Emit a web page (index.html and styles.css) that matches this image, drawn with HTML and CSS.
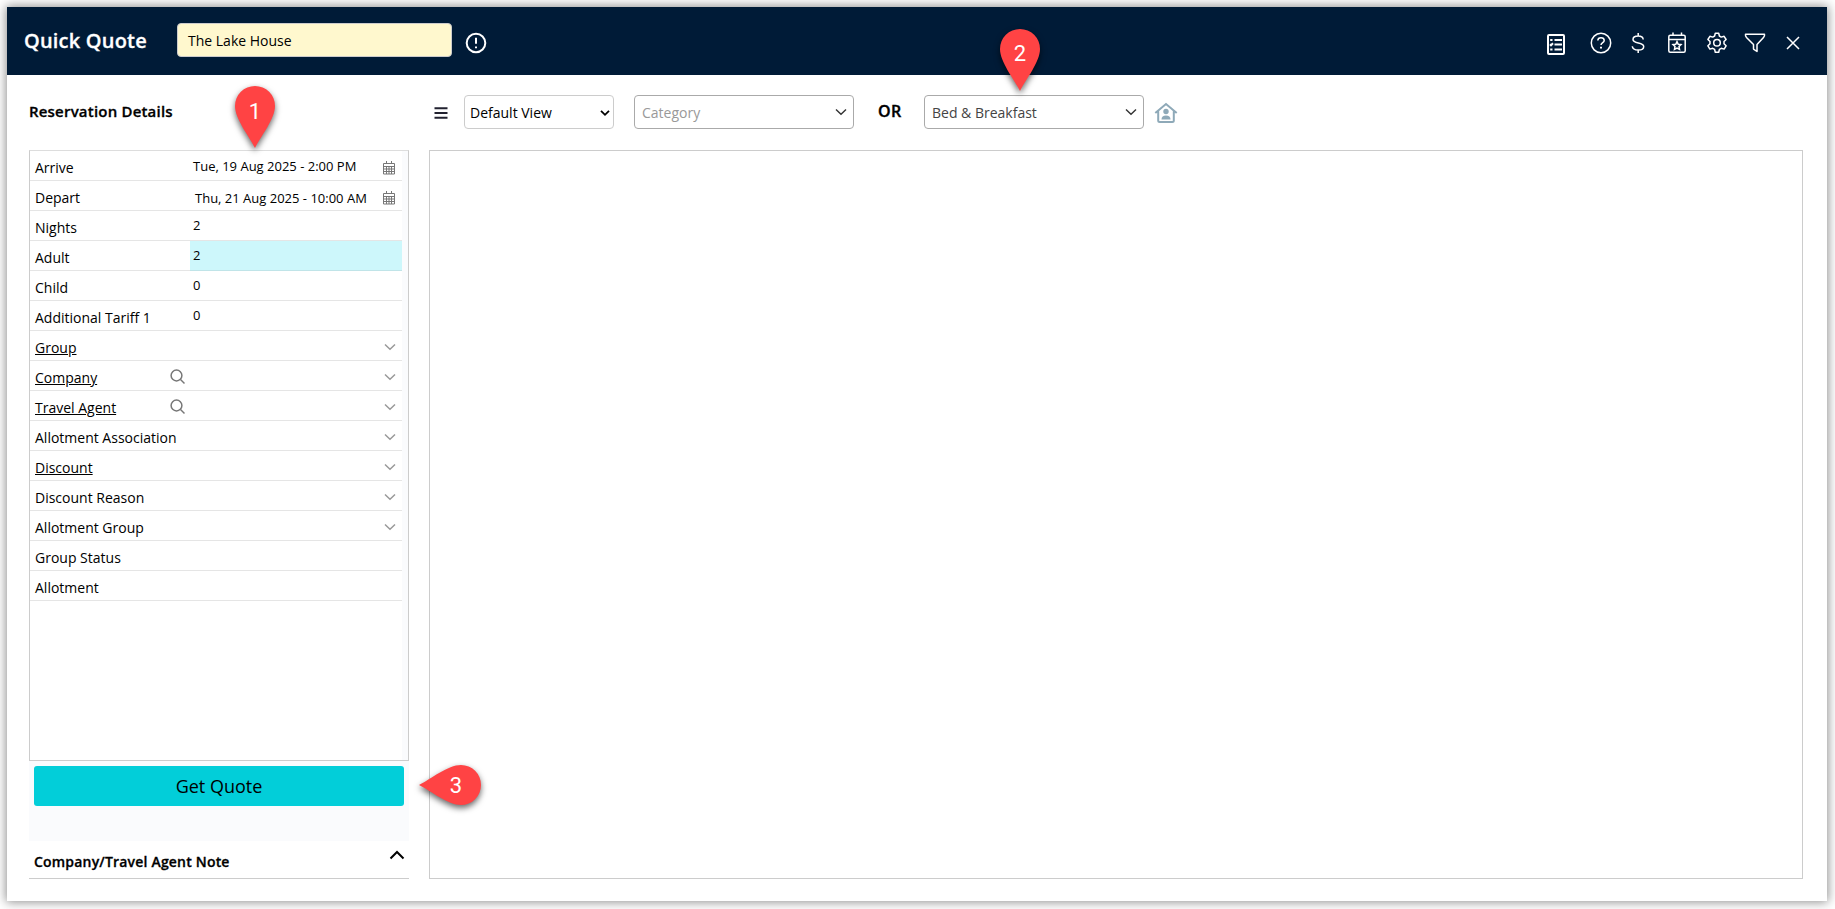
FILE: index.html
```html
<!DOCTYPE html>
<html lang="en">
<head>
<meta charset="utf-8">
<title>Quick Quote</title>
<link rel="stylesheet" href="styles.css">
</head>
<body>
<svg width="0" height="0" class="defs">
  <defs>
    <symbol id="chev" viewBox="0 0 12 8"><path d="M1 1.5 6 6.3 11 1.5"/></symbol>
    <symbol id="cal" viewBox="0 0 12 14"><path d="M.5 2.5h11v10.5H.5zM.5 5.5h11M.5 8h11M.5 10.5h11M3.5 5.5v7.500M6 5.500v7.500M8.500 5.500v7.500M3.500 0v3M8.500 0v3"/></symbol>
    <symbol id="mag" viewBox="0 0 16 16"><circle cx="6.500" cy="6.500" r="5.400"/><path d="M10.500 10.500 14.500 14.500"/></symbol>
    <symbol id="pin" viewBox="0 0 40 62"><path d="M20 62C14 50 0 33 0 20a20 20 0 0 1 40 0C40 33 26 50 20 62z"/></symbol>
  </defs>
</svg>
<div class="window">
  <header class="titlebar">
    <h1 class="title">Quick Quote</h1>
    <div class="property">The Lake House</div>
    <svg class="info" width="22" height="22" viewBox="0 0 22 22"><circle cx="11" cy="11" r="9.300"/><path d="M11 5.800v6"/><path d="M11 14.500v1.700"/></svg>
    <nav class="tools">
      <svg class="t-list" width="18" height="21" viewBox="0 0 18 21"><rect x="1" y="1" width="16" height="19" rx="1"/><path d="M7.500 6H15M7.500 10.500H15M7.500 15.500H15M3.200 6h2.300M3 10.300l1 1 2-2M3.200 15.500h2.300"/></svg>
      <svg class="t-help" width="22" height="22" viewBox="0 0 22 22"><circle cx="11" cy="11" r="9.700"/><path d="M7.800 8.500C7.900 6.700 9.200 5.800 11 5.800s3.200 1 3.200 2.600c0 2.200-3.200 2.100-3.200 4.600"/><path d="M11 14.800v1.600" class="thick"/></svg>
      <svg class="t-dollar" width="14" height="22" viewBox="0 0 14 22"><path d="M12.200 7.500C12 5.200 10 4 7.200 4 4.200 4 2 5.200 2 7.400c0 4.800 10.700 2.200 10.700 7C12.700 16.700 10.200 18 7.200 18 3.800 18 1.500 16.700 1.300 14.200M7.200 1v3M7.200 18v3"/></svg>
      <svg class="t-cal" width="18" height="22" viewBox="0 0 18 22"><rect x=".8" y="3.200" width="16.400" height="17" rx="1.500"/><path d="M.8 7.500h16.400M5 .5v3M13.500 .5v3"/><path d="m9 9.600 1.200 2.600 2.800.3-2 2 .5 2.900L9 16l-2.500 1.400.5-2.900-2-2 2.800-.3z"/></svg>
      <svg class="t-gear" width="22" height="22" viewBox="0 0 22 22"><path stroke-linejoin="round" d="M9.300 1.200h3.400l.7 2.800 1.900 1.100 2.800-.8 2 3.200-2.100 2v2.300l2.100 2-2 3.300-2.800-.8-1.900 1.100-.7 2.900H9.300L8.600 17.400l-1.900-1.100-2.800.8-2-3.300 2.100-2V9.500l-2.100-2 2-3.200 2.800.8L8.600 4z"/><circle cx="11" cy="10.800" r="3.300"/></svg>
      <svg class="t-filter" width="22" height="20" viewBox="0 0 22 20"><path stroke-linejoin="round" d="M1.500 1.200h19c.3 2-.2 2.400-1 3.300L13 11.500V18.500l-3.500-2.400v-4.600L2.500 4.500c-.8-.9-1.300-1.300-1-3.300z"/></svg>
      <svg class="t-close" width="14" height="14" viewBox="0 0 14 14"><path d="m1 1 12 12M13 1 1 13"/></svg>
    </nav>
  </header>
  <div class="content">
    <aside class="side">
      <h2 class="heading">Reservation Details</h2>
      <div class="panel">
        <div class="rows">
          <div class="row"><span class="label">Arrive</span><span class="val arrive">Tue, 19 Aug 2025 - 2:00 PM</span><svg class="cal" width="12" height="14"><use href="#cal"/></svg></div>
          <div class="row"><span class="label">Depart</span><span class="val depart">Thu, 21 Aug 2025 - 10:00 AM</span><svg class="cal" width="12" height="14"><use href="#cal"/></svg></div>
          <div class="row"><span class="label">Nights</span><span class="val">2</span></div>
          <div class="row"><span class="label">Adult</span><span class="val active">2</span></div>
          <div class="row"><span class="label">Child</span><span class="val">0</span></div>
          <div class="row"><span class="label">Additional Tariff 1</span><span class="val">0</span></div>
          <div class="row"><span class="label"><u>Group</u></span><svg class="chev" width="12" height="8"><use href="#chev"/></svg></div>
          <div class="row"><span class="label"><u>Company</u><svg class="mag" width="16" height="16"><use href="#mag"/></svg></span><svg class="chev" width="12" height="8"><use href="#chev"/></svg></div>
          <div class="row"><span class="label"><u>Travel Agent</u><svg class="mag" width="16" height="16"><use href="#mag"/></svg></span><svg class="chev" width="12" height="8"><use href="#chev"/></svg></div>
          <div class="row"><span class="label">Allotment Association</span><svg class="chev" width="12" height="8"><use href="#chev"/></svg></div>
          <div class="row"><span class="label"><u>Discount</u></span><svg class="chev" width="12" height="8"><use href="#chev"/></svg></div>
          <div class="row"><span class="label">Discount Reason</span><svg class="chev" width="12" height="8"><use href="#chev"/></svg></div>
          <div class="row"><span class="label">Allotment Group</span><svg class="chev" width="12" height="8"><use href="#chev"/></svg></div>
          <div class="row"><span class="label">Group Status</span></div>
          <div class="row"><span class="label">Allotment</span></div>
        </div>
      </div>
      <div class="action"><button class="quote">Get Quote</button></div>
      <div class="note"><span>Company/Travel Agent Note</span><svg width="16" height="10" viewBox="0 0 16 10"><path d="M1.500 8.500 8 2l6.500 6.500"/></svg></div>
    </aside>
    <main class="main">
      <div class="filters">
        <svg class="burger" width="14" height="12" viewBox="0 0 14 12"><path d="M.5 1.200h13M.5 6h13M.5 10.800h13"/></svg>
        <div class="select view">Default View<svg width="10" height="8" viewBox="0 0 10 8"><path d="M1 1.800 5 5.800 9 1.800"/></svg></div>
        <div class="select combo category">Category<svg width="12" height="8"><use href="#chev"/></svg></div>
        <b class="or">OR</b>
        <div class="select combo">Bed &amp; Breakfast<svg width="12" height="8"><use href="#chev"/></svg></div>
        <svg class="house" width="24" height="22" viewBox="0 0 24 22"><path class="line" d="M1.300 11 12 2l10.700 9M4.200 9v9.500q0 1.500 1.500 1.500h12.600q1.500 0 1.500-1.500V9"/><circle cx="12" cy="9.500" r="2.700"/><path d="M7.500 17.500q0-4 4.500-4t4.500 4z"/></svg>
      </div>
      <div class="canvas"></div>
    </main>
  </div>
</div>
<div class="marker one"><svg width="40" height="62"><use href="#pin"/></svg><span>1</span></div>
<div class="marker two"><svg width="40" height="62"><use href="#pin"/></svg><span>2</span></div>
<div class="marker three"><svg width="62" height="40" viewBox="0 0 62 40"><path d="M0 20C12 14 29 0 42 0a20 20 0 0 1 0 40C29 40 12 26 0 20z"/></svg><span>3</span></div>
</body>
</html>
```
FILE: styles.css
```css
* { box-sizing: border-box; }
body { margin: 0; padding: 7px 8px 8px 7px; height: 909px; overflow: hidden; background: #fff; font: 14px/20px "Open Sans", "Noto Sans", sans-serif; color: #000; }
svg { fill: none; stroke: currentColor; flex: none; display: block; }
.defs { position: absolute; }
.window { display: flex; flex-direction: column; height: 894px; background: #fff; box-shadow: 0 0 10px 1px rgba(0,0,0,.45); }
.titlebar { display: flex; height: 68px; background: #001b37; color: #fff; }
.title { width: 170px; margin: 0; padding: 20px 0 0 17px; font-size: 20px; line-height: 28px; font-weight: 600; letter-spacing: .2px; -webkit-text-stroke: .3px; }
.property { width: 275px; height: 34px; margin-top: 16px; padding: 7px 10px 0; border: 1px solid #ccc; border-radius: 4px; background: #fff8ce; color: #000; line-height: 19px; }
.info { margin: 25px 0 0 13px; stroke-width: 2; }
.tools { display: flex; flex: 1; justify-content: flex-end; padding-right: 27px; stroke-width: 1.5; }
.t-list { margin: 27px 25px 0 0; stroke-width: 2; }
.t-help { margin: 25px 19px 0 0; }
.t-dollar { margin: 25px 23px 0 0; }
.t-cal { margin: 25px 20px 0 0; }
.t-gear { margin: 25px 16px 0 0; }
.t-filter { margin: 26px 20px 0 0; }
.t-close { margin-top: 29px; }
.thick { stroke-width: 2; }
.content { display: flex; flex: 1; gap: 20px; padding: 0 24px 22px 22px; }
.side { display: flex; flex-direction: column; width: 380px; }
.heading { height: 75px; margin: 0; padding: 24px 0 0; font-size: 15px; line-height: 24px; font-weight: 600; letter-spacing: .2px; -webkit-text-stroke: .3px; }
.panel { height: 611px; padding-right: 6px; border: 1px solid #ccc; border-top-color: #ddd; background: #fafbfd; }
.rows { height: 100%; background: #fff; }
.row { display: flex; height: 30px; border-bottom: 1px solid #e5e5e5; }
.label { display: flex; justify-content: space-between; width: 160px; padding: 7px 4px 0 5px; white-space: nowrap; }
.label u { text-underline-offset: 1px; }
.val { flex: 1; padding: 4px 0 0 3px; font-size: 13px; }
.val.arrive { padding-top: 5px; }
.val.depart { padding: 7px 0 0 5px; }
.val.active { height: 30px; background: #cdf7fb; border-bottom: 1px solid #c0e4e8; }
.cal { margin: 10px 7px 0 0; color: #777; }
.chev { margin: 12px 6px 0 auto; color: #999; stroke-width: 1.5; }
.mag { margin-top: 1px; color: #777; stroke-width: 1.5; }
.action { height: 80px; padding: 5px; background: #fafbfd; }
.quote { display: block; width: 100%; height: 40px; padding: 0; border: 0; border-radius: 3px; background: #02ced9; color: #000; font: 18px/40px "Open Sans", sans-serif; }
.note { display: flex; justify-content: space-between; height: 38px; padding: 11px 4px 0 5px; border-bottom: 1px solid #ccc; font-weight: 600; letter-spacing: .19px; -webkit-text-stroke: .3px; }
.note svg { margin-top: -2px; stroke-width: 2; }
.main { display: flex; flex-direction: column; flex: 1; }
.filters { display: flex; height: 75px; padding-top: 20px; }
.burger { margin: 12px 16px 0 5px; stroke-width: 2; color: #222230; }
.select { display: flex; justify-content: space-between; align-items: center; height: 34px; padding-top: 1px; border: 1px solid #ccc; border-radius: 4px; line-height: 21px; }
.view { width: 150px; padding-left: 5px; padding-right: 3px; margin-right: 20px; }
.view svg { stroke-width: 1.8; }
.combo { width: 220px; padding-left: 7px; padding-right: 6px; border-color: #aaa; color: #444; }
.combo svg { margin-top: -2px; stroke-width: 1.4; color: #333; }
.category { color: #999; }
.or { width: 70px; padding: 6px 0 0 24px; font-size: 16px; font-weight: 600; letter-spacing: .3px; -webkit-text-stroke: .4px; }
.house { margin: 7px 0 0 10px; fill: #8ea9b8; color: #8ea9b8; stroke: none; }
.house .line { fill: none; stroke: #8ea9b8; stroke-width: 2; }
.canvas { flex: 1; border: 1px solid #ccc; }
.marker { position: absolute; color: #fff; font: 22px/26px Roboto, sans-serif; text-align: center; }
.marker svg { fill: #ff4344; stroke: none; overflow: visible; filter: drop-shadow(0 3px 3px rgba(0,0,0,.6)); }
.marker span { position: absolute; left: 0; top: 12px; width: 40px; }
.one { left: 235px; top: 86px; }
.one span { top: 13px; }
.two { left: 1000px; top: 29px; }
.three { left: 419px; top: 765px; }
.three span { left: 17px; top: 8px; }
```
